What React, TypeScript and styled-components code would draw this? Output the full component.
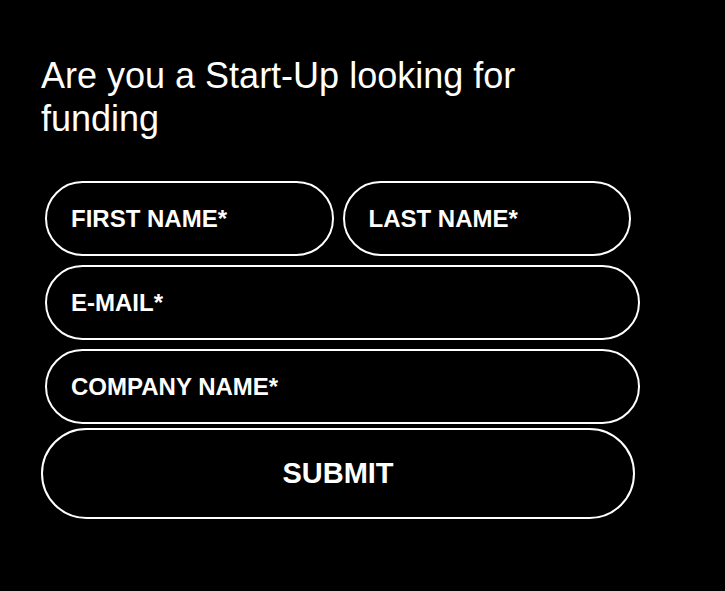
import React from "react";
import styled, { createGlobalStyle } from "styled-components";

const GlobalStyle = createGlobalStyle`
  *, *::before, *::after { box-sizing: border-box; }
  body {
    margin: 0;
    background: #000;
    color: #fff;
    font-family: "Liberation Sans", Arial, Helvetica, sans-serif;
  }
`;

const Section = styled.main`
  min-height: 100vh;
  padding: 54px 90px 72px 41px;
`;

const Title = styled.h1`
  max-width: 520px;
  margin: 0 0 41px;
  font-size: 36px;
  font-weight: 400;
  line-height: 43px;
`;

const Fields = styled.div`
  display: flex;
  flex-direction: column;
  gap: 9px;
  padding-left: 4px;
  margin: 0 -5px 4px 0;
`;

const NameRow = styled.div`
  display: grid;
  grid-template-columns: 1fr 1fr;
  gap: 9px;
  padding-right: 9px;
`;

const Field = styled.input`
  width: 100%;
  min-width: 0;
  height: 75px;
  padding: 0 24px;
  border: 2px solid #fff;
  border-radius: 40px;
  background: transparent;
  color: #fff;
  font: bold 24px "Liberation Sans", Arial, Helvetica, sans-serif;

  &::placeholder {
    color: #fff;
    opacity: 1;
  }
`;

const SubmitButton = styled.button`
  display: block;
  width: 100%;
  height: 91px;
  padding: 0 24px;
  border: 2px solid #fff;
  border-radius: 50px;
  background: transparent;
  color: #fff;
  font: bold 29px "Liberation Sans", Arial, Helvetica, sans-serif;
  cursor: pointer;
`;

export default function App() {
  return (
    <Section>
      <GlobalStyle />
      <Title>Are you a Start-Up looking for funding</Title>
      <form>
        <Fields>
          <NameRow>
            <Field type="text" name="firstName" placeholder="FIRST NAME*" aria-label="First name" required />
            <Field type="text" name="lastName" placeholder="LAST NAME*" aria-label="Last name" required />
          </NameRow>
          <Field type="email" name="email" placeholder="E-MAIL*" aria-label="E-mail" required />
          <Field type="text" name="company" placeholder="COMPANY NAME*" aria-label="Company name" required />
        </Fields>
        <SubmitButton type="submit">SUBMIT</SubmitButton>
      </form>
    </Section>
  );
}
